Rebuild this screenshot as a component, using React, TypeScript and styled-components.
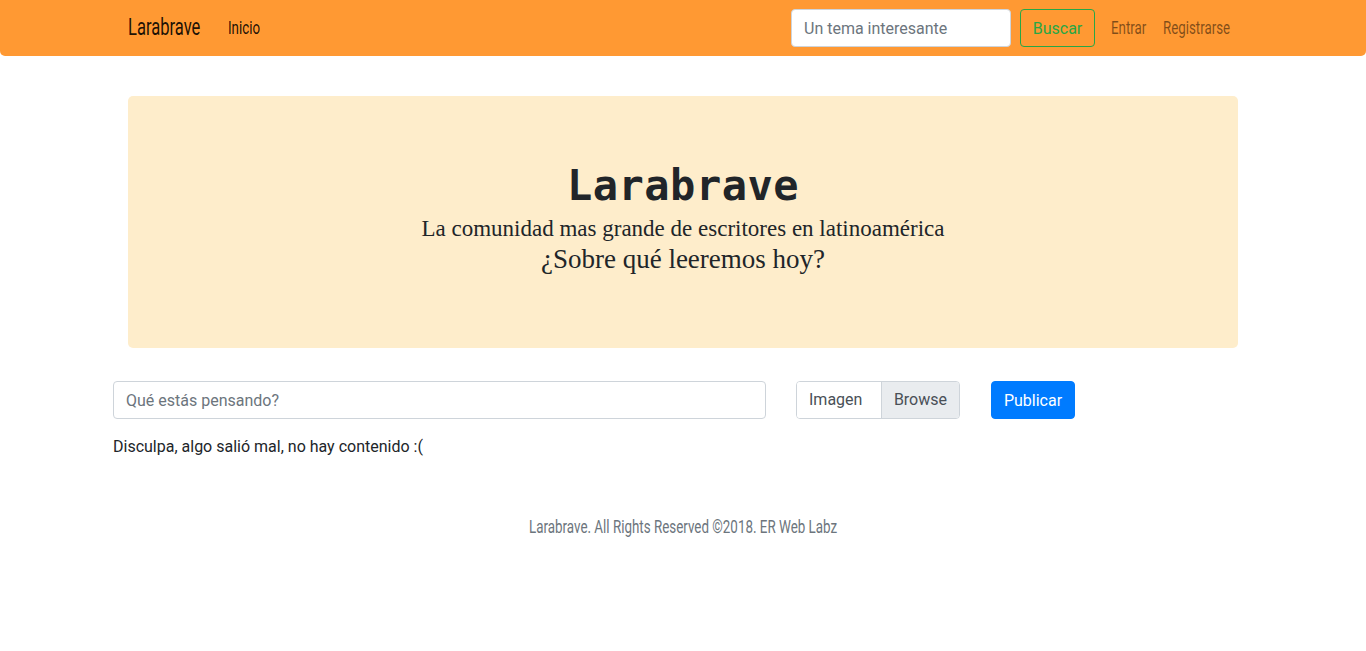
import React from 'react';
import styled, { createGlobalStyle } from 'styled-components';

const GlobalStyle = createGlobalStyle`
  * { box-sizing: border-box; }
  body {
    margin: 0;
    font-family: Roboto, "Liberation Sans", sans-serif;
    font-size: 16px;
    line-height: 1.5;
    color: #212529;
    background: #fff;
  }
`;

// no condensed face is installed: Roboto squeezed horizontally stands in for it
const NarrowBox = styled.span<{ $w: number }>`
  display: inline-block;
  width: ${({ $w }) => $w}px;
  white-space: nowrap;

  & > span {
    display: inline-block;
    transform: scaleX(0.72);
    transform-origin: left center;
  }
`;

function Narrow({ w, children }: { w: number; children: React.ReactNode }) {
  return (
    <NarrowBox $w={w}>
      <span>{children}</span>
    </NarrowBox>
  );
}

const NavBar = styled.nav`
  background: #ff9933;
  height: 56px;
  border-radius: 0 0 5px 5px;
`;

const NavInner = styled.div`
  max-width: 1140px;
  height: 100%;
  margin: 0 auto;
  padding: 0 23px 0 15px;
  display: flex;
  align-items: center;
`;

const Brand = styled.a`
  font-size: 23px;
  line-height: 30px;
  color: rgba(0, 0, 0, 0.9);
  margin-right: 28px;
`;

const NavLink = styled.a<{ $active?: boolean; $gap?: number }>`
  font-size: 18.5px;
  line-height: 26px;
  margin-left: ${({ $gap = 0 }) => $gap}px;
  color: ${({ $active }) => ($active ? 'rgba(0, 0, 0, 0.9)' : 'rgba(0, 0, 0, 0.5)')};
`;

const Spacer = styled.div`
  flex: 1;
`;

const SearchForm = styled.form`
  display: flex;
  align-items: center;
  gap: 9px;
`;

const Input = styled.input<{ $width: number }>`
  width: ${({ $width }) => $width}px;
  height: 38px;
  padding: 6px 12px;
  font-family: Roboto, sans-serif;
  font-size: 16px;
  color: #495057;
  border: 1px solid #ced4da;
  border-radius: 4px;
  background: #fff;
  &::placeholder { color: #6c757d; }
`;

const OutlineButton = styled.button`
  width: 75px;
  height: 38px;
  padding: 6px 0;
  font-family: Roboto, sans-serif;
  font-size: 16px;
  color: #28a745;
  background: transparent;
  border: 1px solid #28a745;
  border-radius: 4px;
`;

const Container = styled.div`
  max-width: 1140px;
  margin: 0 auto;
`;

const Jumbotron = styled.section`
  margin: 40px 15px 33px;
  padding: 64px 32px 76px;
  background: #feedcb;
  border-radius: 5px;
  text-align: center;
`;

const Title = styled.h1`
  margin: 0;
  font-family: "DejaVu Sans Mono", "Liberation Mono", monospace;
  font-weight: 700;
  font-size: 42px;
  line-height: 52px;
  letter-spacing: 0.5px;
  color: #212529;
`;

const Lead = styled.p<{ $size: number; $lh: number }>`
  margin: 0;
  font-family: "Liberation Serif", "DejaVu Serif", serif;
  font-size: ${({ $size }) => $size}px;
  line-height: ${({ $lh }) => $lh}px;
  color: #212529;
`;

const PostRow = styled.form`
  display: flex;
  align-items: center;
  gap: 30px;
`;

const FileGroup = styled.label`
  display: flex;
  width: 164px;
  height: 38px;
  border: 1px solid #ced4da;
  border-radius: 4px;
  overflow: hidden;
  font-family: Roboto, sans-serif;
  color: #495057;
`;

const FileLabel = styled.span`
  flex: 1;
  padding: 6px 12px;
  background: #fff;
`;

const FileBrowse = styled.span`
  padding: 6px 12px;
  background: #e9ecef;
  border-left: 1px solid #ced4da;
`;

const PrimaryButton = styled.button`
  width: 84px;
  height: 38px;
  margin-left: 1px;
  padding: 6px 0;
  font-family: Roboto, sans-serif;
  font-size: 16px;
  color: #fff;
  background: #007bff;
  border: 1px solid #007bff;
  border-radius: 4px;
`;

const Empty = styled.p`
  margin: 16px 0 0;
`;

const Footer = styled.footer`
  margin-top: 55px;
  text-align: center;
  font-size: 18.6px;
  color: #6c757d;
`;

export default function App() {
  return (
    <>
      <GlobalStyle />
      <NavBar>
        <NavInner>
          <Brand>
            <Narrow w={72}>Larabrave</Narrow>
          </Brand>
          <NavLink $active>
            <Narrow w={33}>Inicio</Narrow>
          </NavLink>
          <Spacer />
          <SearchForm>
            <Input $width={220} placeholder="Un tema interesante" />
            <OutlineButton type="button">Buscar</OutlineButton>
          </SearchForm>
          <NavLink $gap={16}>
            <Narrow w={36}>Entrar</Narrow>
          </NavLink>
          <NavLink $gap={16}>
            <Narrow w={67}>Registrarse</Narrow>
          </NavLink>
        </NavInner>
      </NavBar>
      <Container>
        <Jumbotron>
          <Title>Larabrave</Title>
          <Lead $size={23} $lh={34}>
            La comunidad mas grande de escritores en latinoamérica
          </Lead>
          <Lead $size={27} $lh={26}>
            ¿Sobre qué leeremos hoy?
          </Lead>
        </Jumbotron>
        <PostRow>
          <Input $width={653} placeholder="Qué estás pensando?" />
          <FileGroup>
            <FileLabel>Imagen</FileLabel>
            <FileBrowse>Browse</FileBrowse>
          </FileGroup>
          <PrimaryButton type="button">Publicar</PrimaryButton>
        </PostRow>
        <Empty>Disculpa, algo salió mal, no hay contenido :(</Empty>
        <Footer>
          <Narrow w={308}>Larabrave. All Rights Reserved ©2018. ER Web Labz</Narrow>
        </Footer>
      </Container>
    </>
  );
}
